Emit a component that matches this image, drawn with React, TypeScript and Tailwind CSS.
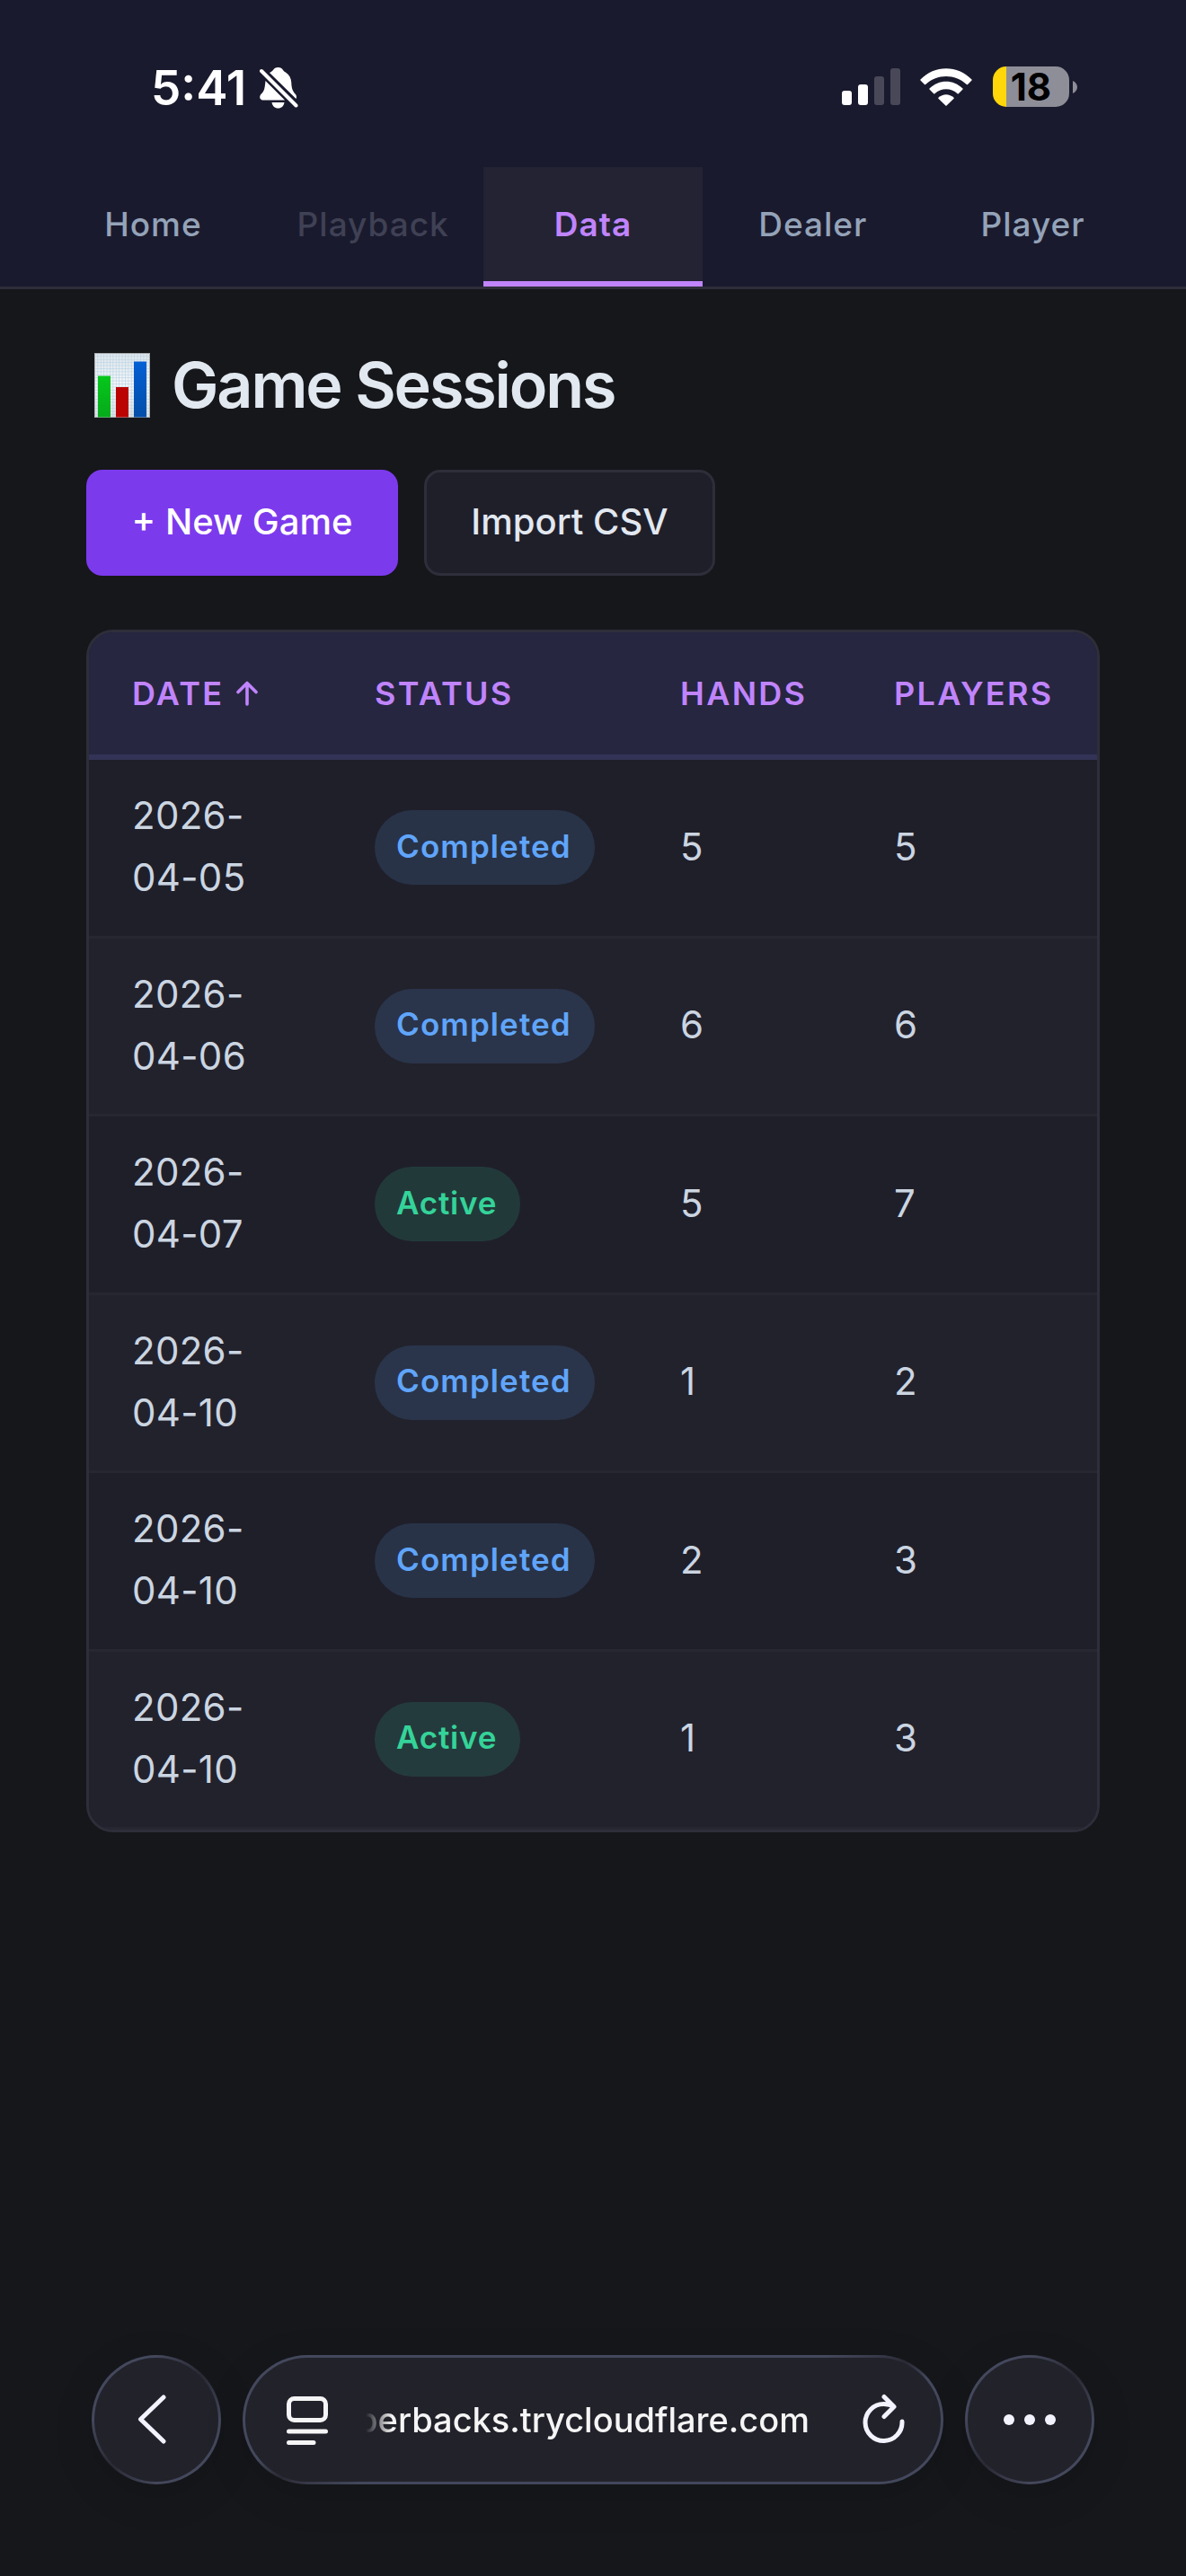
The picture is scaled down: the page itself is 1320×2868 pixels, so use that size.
import React from "react";

type Status = "Completed" | "Active";

interface Session {
  date: [string, string];
  status: Status;
  hands: number;
  players: number;
}

const sessions: Session[] = [
  { date: ["2026-", "04-05"], status: "Completed", hands: 5, players: 5 },
  { date: ["2026-", "04-06"], status: "Completed", hands: 6, players: 6 },
  { date: ["2026-", "04-07"], status: "Active", hands: 5, players: 7 },
  { date: ["2026-", "04-10"], status: "Completed", hands: 1, players: 2 },
  { date: ["2026-", "04-10"], status: "Completed", hands: 2, players: 3 },
  { date: ["2026-", "04-10"], status: "Active", hands: 1, players: 3 },
];

const tabs = [
  { label: "Home", style: "font-medium text-[#94a3b8] border-transparent" },
  { label: "Playback", style: "font-medium text-[#3f4154] border-transparent" },
  { label: "Data", style: "font-semibold text-[#c084fc] bg-[#232333] border-[#c084fc]" },
  { label: "Dealer", style: "font-medium text-[#94a3b8] border-transparent" },
  { label: "Player", style: "font-medium text-[#94a3b8] border-transparent" },
];

const badgeStyles: Record<Status, string> = {
  Completed: "bg-[#60a5fa]/15 text-[#60a5fa] tracking-[1.100px]",
  Active: "bg-[#34d399]/15 text-[#34d399] tracking-[0.800px]",
};

const BellOff = () => (
  <svg className="w-[44px] h-[48px]" viewBox="0 0 44 48">
    <path
      fill="#fff"
      d="M12 7C14 6 15 5 16 4C17 2 19 1 21.500 1C24 1 26 2 27 4C28 5.500 29 6 30.500 7C34 9.500 36 13 36.300 18C36.500 25 38 27.500 40.500 30.500C42 32 42.500 34 41.500 36L12 7Z"
    />
    <path
      fill="#fff"
      d="M7.500 16L29 37.500H5C2 37.500 0.500 35 1.500 32.500C2 31 4 29.500 5.200 27.500C6.800 25 7 20 7.500 16Z"
    />
    <path fill="#fff" d="M14.500 40H28.500C28 43.800 25.300 46.500 21.500 46.500C17.700 46.500 15 43.800 14.500 40Z" />
    <path d="M3 5L41.500 43.500" stroke="#1a1a2e" strokeWidth="8" />
    <path d="M3 5L41.500 43.500" stroke="#fff" strokeWidth="4" strokeLinecap="round" />
  </svg>
);

const Signal = () => (
  <svg className="w-[65px] h-[41px]" viewBox="0 0 65 41">
    <rect x="0" y="25" width="11" height="16" rx="3" fill="#fff" />
    <rect x="18" y="18" width="11" height="23" rx="3" fill="#fff" />
    <rect x="36" y="9" width="11" height="32" rx="3" fill="#484858" />
    <rect x="54" y="0" width="11" height="41" rx="3" fill="#484858" />
  </svg>
);

const Wifi = () => (
  <svg className="w-[58px] h-[42px]" viewBox="0 0 58 42" fill="#fff">
    <path d="M0.500 12.500C16 -4 42 -4 57.500 12.500Q58 13 57.500 13.500L53 18Q52.400 18.600 51.800 18C39 6 19 6 6.200 18Q5.600 18.600 5 18L0.500 13.500Q0 13 0.500 12.500Z" />
    <path d="M10.500 22.500C21 12 37 12 47.500 22.500Q48 23 47.500 23.500L42.800 28.200Q42.200 28.800 41.600 28.200C34.500 21.600 23.500 21.600 16.400 28.200Q15.800 28.800 15.200 28.200L10.500 23.500Q10 23 10.500 22.500Z" />
    <path d="M20.400 32.800C25.500 28 32.500 28 37.600 32.800Q38 33.300 37.600 33.800L29.600 41.600Q29 42.100 28.400 41.600L20.400 33.800Q20 33.300 20.400 32.800Z" />
  </svg>
);

const Battery = () => (
  <div className="flex items-center gap-[4px]">
    <div className="flex h-[45px] w-[85px] items-center justify-center rounded-[15px] bg-linear-to-r from-[#ffd60a] from-[17.6%] to-[#8e8e98] to-[17.6%]">
      <span className="text-[42px] leading-[45px] font-bold text-black">18</span>
    </div>
    <svg className="w-[5px] h-[14px]" viewBox="0 0 5 14">
      <path d="M0 0C3 1.500 5 4 5 7C5 10 3 12.500 0 14Z" fill="#8e8e98" />
    </svg>
  </div>
);

const StatusBar = () => (
  <div className="flex h-[186px] items-start justify-between pl-[168px] pr-[121px] pt-[74px]">
    <div className="flex h-[47px] items-center">
      <span className="w-[120px] pt-px text-[53px] leading-none font-semibold text-white">5:41</span>
      <BellOff />
    </div>
    <div className="flex h-[45px] items-center">
      <Signal />
      <div className="ml-[22px] mr-[23px]">
        <Wifi />
      </div>
      <Battery />
    </div>
  </div>
);

const ChartIcon = () => (
  <svg className="w-[62px] h-[72px]" viewBox="0 0 62 72">
    <defs>
      <linearGradient id="paper" x1="0" y1="0" x2="0" y2="1">
        <stop offset="0" stopColor="#dfe5ea" />
        <stop offset="0.500" stopColor="#f6f8f9" />
        <stop offset="1" stopColor="#dcdfe1" />
      </linearGradient>
      <pattern id="grid" width="3.400" height="3.400" patternUnits="userSpaceOnUse">
        <path d="M0 0.500H3.400M0.500 0V3.400" stroke="#b3d0e6" strokeWidth="0.600" />
      </pattern>
      <linearGradient id="green" x1="0" y1="0" x2="0" y2="1">
        <stop offset="0" stopColor="#05c71b" />
        <stop offset="1" stopColor="#06aa1b" />
      </linearGradient>
      <linearGradient id="blue" x1="0" y1="0" x2="0" y2="1">
        <stop offset="0" stopColor="#0460d4" />
        <stop offset="1" stopColor="#044ea8" />
      </linearGradient>
    </defs>
    <rect width="62" height="72" fill="url(#paper)" />
    <rect width="62" height="72" fill="url(#grid)" />
    <rect x="0.500" y="0.500" width="61" height="71" fill="none" stroke="#a9adb1" />
    <rect x="4" y="25.500" width="14" height="46" fill="url(#green)" />
    <rect x="24" y="38" width="14" height="33.500" fill="#bb0303" />
    <rect x="44" y="9.500" width="14" height="62" fill="url(#blue)" />
  </svg>
);

const SessionTable = () => (
  <div className="mt-[60px] overflow-hidden rounded-[30px] border-[3px] border-[#2e2e3a] bg-[#1f1f2a]">
    <div className="grid h-[142px] grid-cols-[270px_340px_238px_274px] items-center border-b-[6px] border-[#333357] bg-[#262641] text-[36px] font-semibold tracking-[2.300px] text-[#c084fc]">
      <div className="flex items-center pl-12">
        <span>DATE</span>
        <svg className="ml-[14px] w-[24px] h-[28px]" viewBox="0 0 24 28" fill="none" stroke="#c084fc" strokeWidth="3.600" strokeLinecap="round" strokeLinejoin="round">
          <path d="M12 26V2.500M2 12.500L12 2.500L22 12.500" />
        </svg>
      </div>
      <div className="pl-12">STATUS</div>
      <div className="pl-12">HANDS</div>
      <div className="pl-12">PLAYERS</div>
    </div>
    {sessions.map((session, index) => (
      <div
        key={index}
        className="grid h-[198.500px] grid-cols-[270px_340px_238px_274px] items-center border-b-[3px] border-[#272731] text-[42px] leading-[69px] text-[#cbd5e1] even:bg-[#1f1f2a] odd:bg-[#22222d]"
      >
        <div className="pl-12 pb-[3px] tracking-[0.300px]">
          <div>{session.date[0]}</div>
          <div>{session.date[1]}</div>
        </div>
        <div className="flex pl-12">
          <span className={`flex h-[83px] items-center rounded-full pl-6 pr-[26px] pb-[3px] text-[35px] font-semibold ${badgeStyles[session.status]}`}>
            {session.status}
          </span>
        </div>
        <div className="pl-12 pb-[3px]">{session.hands}</div>
        <div className="pl-12 pb-[3px]">{session.players}</div>
      </div>
    ))}
  </div>
);

const glassEdge = "bg-linear-to-br from-[#44485c] via-[#292933] to-[#44485c] p-[3px] shadow-[0_12px_48px_rgba(0,0,0,0.12)]";

const BrowserBar = () => (
  <div className="mt-auto mb-[102px] flex h-[144px] gap-6 px-[102px]">
    <div className={`size-[144px] rounded-full from-25% to-75% ${glassEdge}`}>
      <div className="flex size-full items-center justify-center rounded-full bg-[#22222b]">
        <svg className="mr-[10px] w-[32px] h-[56px]" viewBox="0 0 32 56" fill="none" stroke="#f2f3ff" strokeWidth="5" strokeLinecap="round" strokeLinejoin="round">
          <path d="M29 3L3.500 27.500L29 52" />
        </svg>
      </div>
    </div>
    <div className={`flex-1 rounded-full from-42% to-58% ${glassEdge}`}>
      <div className="flex size-full items-center rounded-full bg-[#22222b] pl-[46px] pr-[38px]">
        <svg className="w-[46px] h-[56px]" viewBox="0 0 46 56" fill="none" stroke="#f5f5f5" strokeWidth="5" strokeLinecap="round">
          <rect x="2.500" y="4.500" width="41" height="24" rx="6" />
          <path d="M2.500 41H43.500M2.500 53.500H30" />
        </svg>
        <div className="ml-[42px] flex h-[60px] w-[494px] items-center justify-end overflow-hidden text-[38px] font-medium text-[#f5f5f5] mask-l-from-[94%] mask-l-to-100%">
          <span className="whitespace-nowrap">perbacks.trycloudflare.com</span>
        </div>
        <svg className="ml-auto w-[50px] h-[58px]" viewBox="0 0 50 58" fill="none" stroke="#f2f3ff" strokeWidth="5" strokeLinecap="round" strokeLinejoin="round">
          <path d="M45 31A20.500 20.500 0 1 1 24.500 11.500C29 11.500 32 12 36 14.500M25 3.500L36 14.500L25 25.500" />
        </svg>
      </div>
    </div>
    <div className={`size-[144px] rounded-full from-25% to-75% ${glassEdge}`}>
      <div className="flex size-full items-center justify-center gap-[11px] rounded-full bg-[#22222b]">
        <span className="size-3 rounded-full bg-[#f2f3ff]" />
        <span className="size-3 rounded-full bg-[#f2f3ff]" />
        <span className="size-3 rounded-full bg-[#f2f3ff]" />
      </div>
    </div>
  </div>
);

export default function App() {
  return (
    <div className="flex h-[2868px] w-[1320px] flex-col bg-[#16171b] font-['Inter',sans-serif]">
      <header className="border-b-[3px] border-[#2e2e3a] bg-[#1a1a2e]">
        <StatusBar />
        <nav className="flex h-[133px] px-12">
          {tabs.map((tab) => (
            <div key={tab.label} className={`flex flex-1 items-center justify-center border-b-[6px] text-[37px] tracking-[1px] ${tab.style}`}>
              {tab.label}
            </div>
          ))}
        </nav>
      </header>
      <main className="px-24 pt-[65px]">
        <div className="flex h-[84px] items-center pl-[9px]">
          <ChartIcon />
          <h1 className="ml-[24px] text-[70px] leading-none font-semibold text-[#e2e8f0] tracking-[-2.100px]">Game Sessions</h1>
        </div>
        <div className="mt-[52px] flex gap-[29px]">
          <button className="h-[118px] w-[347px] rounded-[18px] bg-[#7c3aed] pb-[3px] text-[40px] font-medium text-white">+ New Game</button>
          <button className="h-[118px] w-[324px] rounded-[18px] border-[3px] border-[#2e2e3a] bg-[#1f1f2a] pb-[3px] text-[40px] font-medium text-[#e2e8f0]">
            Import CSV
          </button>
        </div>
        <SessionTable />
      </main>
      <BrowserBar />
    </div>
  );
}
